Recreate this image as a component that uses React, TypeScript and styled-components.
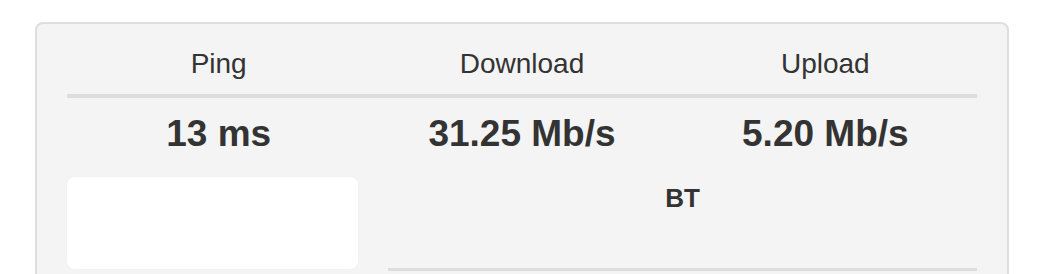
import React from "react";
import styled, { createGlobalStyle } from "styled-components";

const Global = createGlobalStyle`
  html, body {
    margin: 0;
    padding: 0;
    background: #ffffff;
    font-family: "Liberation Sans", Arial, Helvetica, sans-serif;
    color: #333333;
  }
`;

const Page = styled.div`
  padding: 22px 0 0 35px;
  height: 274px;
  box-sizing: border-box;
  overflow: hidden;
`;

const Panel = styled.div`
  width: 974px;
  height: 300px;
  box-sizing: border-box;
  background: #f4f4f4;
  border: 2px solid #dedede;
  border-radius: 8px;
  padding: 0 30px;
`;

const Row = styled.div<{ $divider?: boolean }>`
  display: grid;
  grid-template-columns: repeat(3, 1fr);
  border-bottom: ${(p) => (p.$divider ? "4px solid #dddddd" : "none")};
`;

const HeadCell = styled.div`
  text-align: center;
  font-size: 28px;
  line-height: 32px;
  padding: 24px 0 14px;
`;

const ValueCell = styled.div`
  text-align: center;
  font-size: 37px;
  font-weight: 700;
  line-height: 40px;
  padding-top: 16px;
`;

const Lower = styled.div`
  display: grid;
  grid-template-columns: 291px 1fr;
  column-gap: 30px;
  margin-top: 23px;
  align-items: start;
`;

const LogoBox = styled.div`
  height: 92px;
  background: #ffffff;
  border-radius: 8px;
  box-shadow: 0 0 2px rgba(0, 0, 0, 0.03);
`;

const IspCell = styled.div`
  height: 85px;
  padding-top: 6px;
  border-bottom: 3px solid #dddddd;
  text-align: center;
  font-size: 26px;
  font-weight: 700;
  line-height: 30px;
`;

const heads = ["Ping", "Download", "Upload"];
const values = ["13 ms", "31.25 Mb/s", "5.20 Mb/s"];

export default function App() {
  return (
    <>
      <Global />
      <Page>
        <Panel>
          <Row $divider>
            {heads.map((h) => (
              <HeadCell key={h}>{h}</HeadCell>
            ))}
          </Row>
          <Row>
            {values.map((v) => (
              <ValueCell key={v}>{v}</ValueCell>
            ))}
          </Row>
          <Lower>
            <LogoBox />
            <IspCell>BT</IspCell>
          </Lower>
        </Panel>
      </Page>
    </>
  );
}
